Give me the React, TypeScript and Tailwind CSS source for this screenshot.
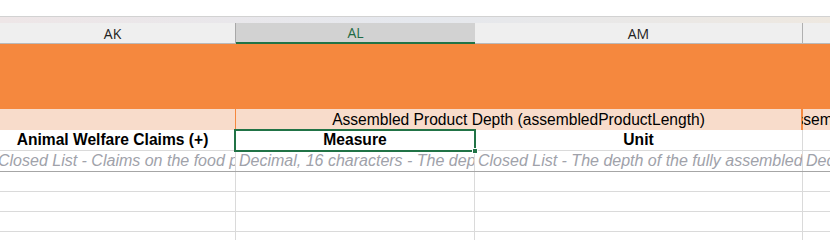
import React from "react";

type Col = { key: string; w: string; extra?: string };

const cols: Col[] = [
  { key: "AK", w: "w-[246px]", extra: "-ml-[10px]" },
  { key: "AL", w: "w-[239px]" },
  { key: "AM", w: "w-[328px]" },
  { key: "AN", w: "w-[60px]" },
];

const notes = [
  "Closed List - Claims on the food product about animal welfare",
  "Decimal, 16 characters - The depth of the fully assembled product",
  "Closed List - The depth of the fully assembled product",
  "Decimal, 16 characters",
];

function EmptyRow() {
  return (
    <div className="flex h-[20px] shrink-0 border-b border-[#dadada]">
      {cols.map((c) => (
        <div key={c.key} className={`${c.w} ${c.extra ?? ""} shrink-0 border-r border-[#dadada]`} />
      ))}
    </div>
  );
}

export default function App() {
  return (
    <div
      className="relative w-[830px] h-[240px] overflow-hidden bg-white flex flex-col"
      style={{ fontFamily: '"Liberation Sans", Arial, sans-serif' }}
    >
      <div className="h-[16px] shrink-0 bg-white" />
      <div className="h-px shrink-0 bg-[#d2d2d2]" />
      <div className="h-[6px] shrink-0 bg-gradient-to-r from-[#eee6e7] via-[#e5e8ee] to-[#eee8e0]" />

      {/* column letters */}
      <div className="flex h-[21px] shrink-0 border-b border-[#b9b9b9] bg-[#efefef] text-[14px] text-[#222]" style={{ fontFamily: '"Open Sans", "DejaVu Sans", sans-serif' }}>
        <div className="w-[246px] -ml-[10px] shrink-0 border-r border-[#a8a8a8] flex items-center justify-center">AK</div>
        <div className="w-[239px] shrink-0 bg-[#d2d2d2] border-b-2 border-[#217346] -mb-px flex items-center justify-center text-[#1e6b45]">AL</div>
        <div className="w-[328px] shrink-0 border-r border-[#b0b0b0] flex items-center justify-center">AM</div>
        <div className="flex-1" />
      </div>

      {/* title band */}
      <div className="h-[65px] shrink-0 bg-[#f5883e]" />

      {/* group row */}
      <div className="flex h-[21px] shrink-0 bg-[#f8dccb] text-[15.6px] text-black leading-[21px]">
        <div className="w-[246px] -ml-[10px] shrink-0 border-r border-[#f5883e]" />
        <div className="w-[567px] shrink-0 border-r-2 border-[#f5883e] text-center whitespace-nowrap -mr-px">
          Assembled Product Depth (assembledProductLength)
        </div>
        <div className="flex-1 overflow-hidden whitespace-nowrap">
          <span className="inline-block -ml-[17px]">Assembled Product Width (assembledProductWidth)</span>
        </div>
      </div>

      {/* attribute row */}
      <div className="flex h-[21px] shrink-0 border-b border-[#dadada] text-[15.6px] font-bold text-black leading-[20px]">
        <div className="w-[246px] -ml-[10px] shrink-0 border-r border-[#dadada] text-center whitespace-nowrap">
          Animal Welfare Claims (+)
        </div>
        <div className="w-[239px] shrink-0 border-r border-[#dadada] text-center">Measure</div>
        <div className="w-[328px] shrink-0 border-r border-[#dadada] text-center">Unit</div>
        <div className="flex-1" />
      </div>

      {/* description row */}
      <div className="flex h-[21px] shrink-0 border-b border-[#a6a6a6] text-[16px] italic text-[#a0a2aa] leading-[20px]">
        {cols.map((c, i) => (
          <div
            key={c.key}
            className={`${c.w} ${c.extra ?? ""} shrink-0 border-r border-[#dadada] overflow-hidden whitespace-nowrap ${i === 0 ? "pl-[8px]" : "pl-[3px]"}`}
          >
            {notes[i]}
          </div>
        ))}
      </div>

      <EmptyRow />
      <EmptyRow />
      <EmptyRow />
      <EmptyRow />

      {/* active cell */}
      <div className="absolute left-[234px] top-[129px] w-[242px] h-[23px] border-2 border-[#217346] pointer-events-none" />
      <div className="absolute left-[472px] top-[148px] w-[6px] h-[6px] bg-[#217346] border border-white" />
    </div>
  );
}
